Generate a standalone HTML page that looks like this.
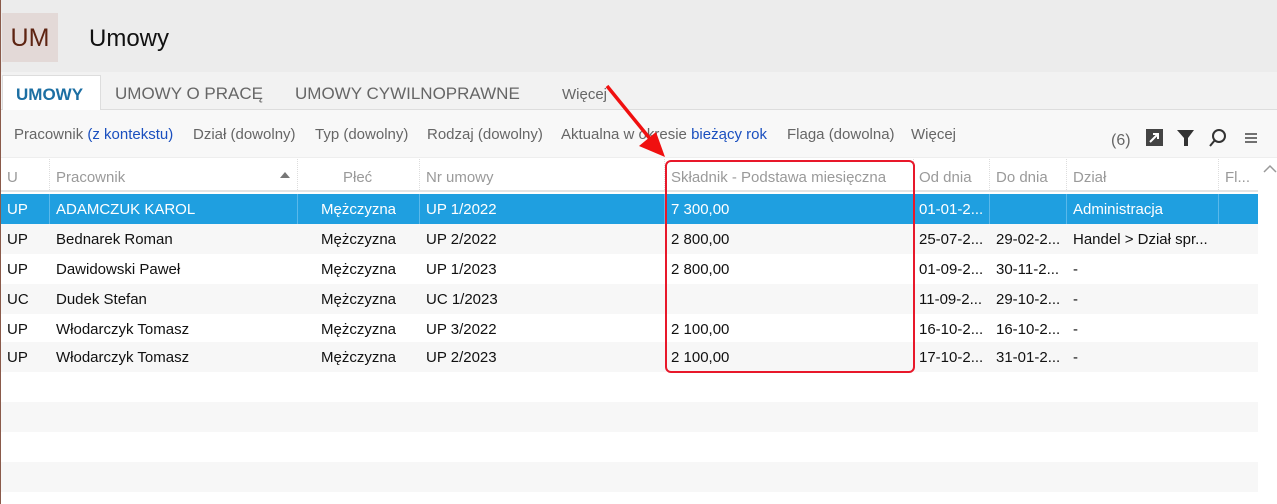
<!DOCTYPE html>
<html><head><meta charset="utf-8"><style>
*{margin:0;padding:0;box-sizing:border-box}
body{width:1277px;height:504px;overflow:hidden;background:#fff;font-family:"Liberation Sans",sans-serif;position:relative;border-left:1px solid #8a5a4a}
.hdr{position:absolute;left:0;top:0;width:1277px;height:72px;background:#ececec}
.logo{position:absolute;left:1px;top:13px;width:56px;height:49px;background:#e3d9d7;color:#5e2412;font-size:25px;line-height:50px;text-align:center}
.title{position:absolute;left:88px;top:25px;font-size:24px;color:#111}
.tabs{position:absolute;left:0;top:72px;width:1277px;height:38px;background:#f2f2f2;border-bottom:1px solid #ddd}
.tab{position:absolute;top:12px;font-size:17px;color:#666}
.tab.act{left:1px;top:3px;width:99px;height:36px;background:#fff;border:1px solid #ddd;border-bottom:none;color:#1c6fa3;font-weight:bold;padding:9px 0 0 13px}
.filt{position:absolute;left:0;top:110px;width:1277px;height:48px;background:#f8f8f8;border-bottom:1px solid #eee}
.filt span{position:absolute;top:16px;font-size:15px;color:#666;white-space:nowrap}
.filt .b{color:#1a4fbf;position:static}
.th{position:absolute;top:159px;left:0;width:1257px;height:33px;background:#fff;border-bottom:2px solid #e4e4e4}
.th span{position:absolute;top:10px;font-size:15px;color:#9a9a9a}
.sep{position:absolute;top:0;height:31px;border-left:1px dotted #ddd}
.row{position:absolute;left:0;width:1257px;height:30px;font-size:15px;color:#111}
.row span{position:absolute;top:7px;white-space:nowrap}
.g{background:#f7f7f7}
.sel{background:#1f9fe0;color:#fff}
.sel i{position:absolute;top:0;height:30px;border-left:1px solid #5ab8ea}
</style></head><body>
<div class="hdr"><div class="logo">UM</div><div class="title">Umowy</div></div>
<div class="tabs">
<div class="tab act">UMOWY</div>
<div class="tab" style="left:114px">UMOWY O PRACĘ</div>
<div class="tab" style="left:294px">UMOWY CYWILNOPRAWNE</div>
<div class="tab" style="left:561px;top:14px;font-size:15px">Więcej</div>
</div>
<div class="filt">
<span style="left:13px">Pracownik <span class="b">(z kontekstu)</span></span>
<span style="left:192px">Dział (dowolny)</span>
<span style="left:314px">Typ (dowolny)</span>
<span style="left:426px">Rodzaj (dowolny)</span>
<span style="left:560px">Aktualna w okresie <span class="b">bieżący rok</span></span>
<span style="left:786px">Flaga (dowolna)</span>
<span style="left:910px">Więcej</span>
<span style="left:1110px;top:22px;font-size:16px">(6)</span>
</div>
<svg style="position:absolute;left:1144px;top:128px" width="20" height="20"><rect x="1" y="1" width="17" height="17" fill="#444"/><path d="M5 14 L13 6 M8 6 H13 V11" stroke="#fff" stroke-width="2" fill="none"/></svg>
<svg style="position:absolute;left:1175px;top:128px" width="20" height="20"><path d="M1 2 H18 L12 10 V18 H8 V10 Z" fill="#333"/></svg>
<svg style="position:absolute;left:1207px;top:128px" width="20" height="20"><circle cx="11" cy="8" r="6" stroke="#333" stroke-width="2" fill="none"/><path d="M7 12 L2 18" stroke="#333" stroke-width="2"/></svg>
<svg style="position:absolute;left:1243px;top:132px" width="14" height="12"><path d="M1 2H13M1 6H13M1 10H13" stroke="#444" stroke-width="1.5"/></svg>
<div class="th">
<span style="left:6px">U</span><div class="sep" style="left:48px"></div>
<span style="left:55px">Pracownik</span><svg style="position:absolute;left:279px;top:13px" width="10" height="6"><path d="M0 6 L5 0 L10 6Z" fill="#777"/></svg><div class="sep" style="left:296px"></div>
<span style="left:342px">Płeć</span><div class="sep" style="left:418px"></div>
<span style="left:425px">Nr umowy</span><div class="sep" style="left:663px"></div>
<span style="left:670px">Składnik - Podstawa miesięczna</span><div class="sep" style="left:912px"></div>
<span style="left:918px">Od dnia</span><div class="sep" style="left:988px"></div>
<span style="left:995px">Do dnia</span><div class="sep" style="left:1065px"></div>
<span style="left:1072px">Dział</span><div class="sep" style="left:1217px"></div>
<span style="left:1224px">Fl...</span>
</div>
<svg style="position:absolute;left:1262px;top:164px" width="14" height="10"><path d="M1 8 L7 2 L13 8" stroke="#999" stroke-width="1.5" fill="none"/></svg>
<div class="row sel" style="top:194px"><i style="left:48px"></i><i style="left:296px"></i><i style="left:418px"></i><i style="left:663px"></i><i style="left:912px"></i><i style="left:988px"></i><i style="left:1065px"></i><i style="left:1217px"></i><span style="left:6px">UP</span><span style="left:55px">ADAMCZUK KAROL</span><span style="left:320px">Mężczyzna</span><span style="left:425px">UP 1/2022</span><span style="left:670px">7 300,00</span><span style="left:918px">01-01-2...</span><span style="left:1072px">Administracja</span></div>
<div class="row g" style="top:224px"><span style="left:6px">UP</span><span style="left:55px">Bednarek Roman</span><span style="left:320px">Mężczyzna</span><span style="left:425px">UP 2/2022</span><span style="left:670px">2 800,00</span><span style="left:918px">25-07-2...</span><span style="left:995px">29-02-2...</span><span style="left:1072px">Handel &gt; Dział spr...</span></div>
<div class="row" style="top:254px"><span style="left:6px">UP</span><span style="left:55px">Dawidowski Paweł</span><span style="left:320px">Mężczyzna</span><span style="left:425px">UP 1/2023</span><span style="left:670px">2 800,00</span><span style="left:918px">01-09-2...</span><span style="left:995px">30-11-2...</span><span style="left:1072px">-</span></div>
<div class="row g" style="top:284px"><span style="left:6px">UC</span><span style="left:55px">Dudek Stefan</span><span style="left:320px">Mężczyzna</span><span style="left:425px">UC 1/2023</span><span style="left:918px">11-09-2...</span><span style="left:995px">29-10-2...</span><span style="left:1072px">-</span></div>
<div class="row" style="top:314px"><span style="left:6px">UP</span><span style="left:55px">Włodarczyk Tomasz</span><span style="left:320px">Mężczyzna</span><span style="left:425px">UP 3/2022</span><span style="left:670px">2 100,00</span><span style="left:918px">16-10-2...</span><span style="left:995px">16-10-2...</span><span style="left:1072px">-</span></div>
<div class="row g" style="top:342px"><span style="left:6px">UP</span><span style="left:55px">Włodarczyk Tomasz</span><span style="left:320px">Mężczyzna</span><span style="left:425px">UP 2/2023</span><span style="left:670px">2 100,00</span><span style="left:918px">17-10-2...</span><span style="left:995px">31-01-2...</span><span style="left:1072px">-</span></div>
<div class="row" style="top:372px"></div>
<div class="row g" style="top:402px"></div>
<div class="row" style="top:432px"></div>
<div class="row g" style="top:462px"></div>
<div style="position:absolute;left:664px;top:160px;width:250px;height:213px;border:2px solid #e8182a;border-radius:6px"></div>
<svg style="position:absolute;left:0;top:0" width="1277" height="504"><path d="M606 86 L650 140" stroke="#f01010" stroke-width="3.5"/><path d="M664 157 L638 146 L655 132 Z" fill="#f01010"/></svg>
</body></html>
